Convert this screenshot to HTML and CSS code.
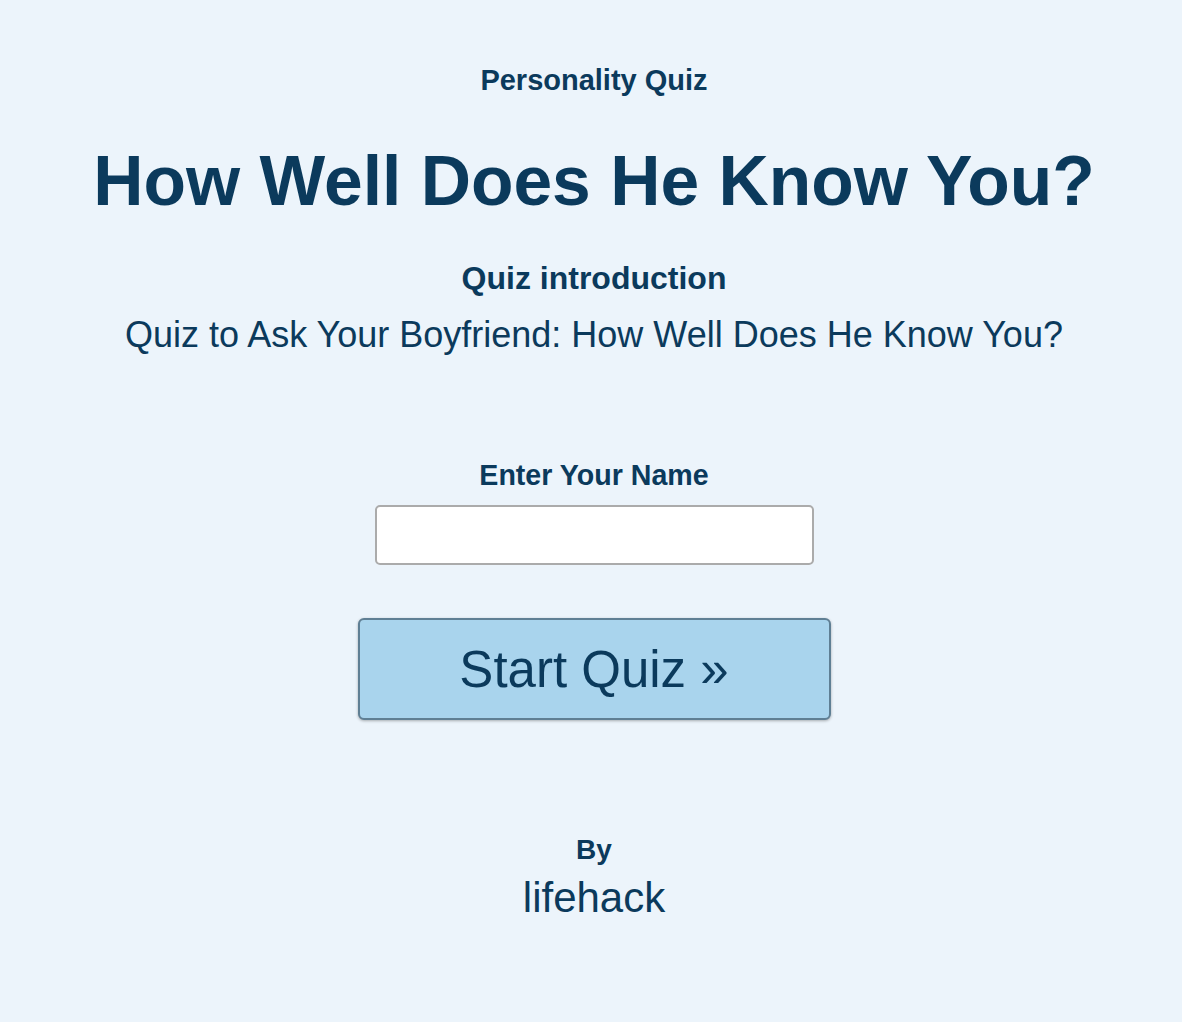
FILE: index.html
```html
<!DOCTYPE html>
<html lang="en">
<head>
<meta charset="utf-8">
<title>How Well Does He Know You?</title>
<link rel="stylesheet" href="styles.css">
</head>
<body>
<main class="quiz">
  <p class="kicker">Personality Quiz</p>
  <h1 class="title">How Well Does He Know You?</h1>
  <h2 class="intro-label">Quiz introduction</h2>
  <p class="intro-text">Quiz to Ask Your Boyfriend: How Well Does He Know You?</p>
  <form class="start-form">
    <label class="name-label" for="name">Enter Your Name</label>
    <input class="name-input" id="name" type="text">
    <button class="start-btn" type="button">Start Quiz »</button>
  </form>
  <div class="author">
    <p class="by">By</p>
    <p class="author-name">lifehack</p>
  </div>
</main>
</body>
</html>
```

FILE: styles.css
```css
html, body {
  margin: 0;
  padding: 0;
  background: #ecf4fb;
}
body {
  font-family: "Liberation Sans", Arial, sans-serif;
  color: #0b3a5c;
}
.quiz {
  display: flex;
  flex-direction: column;
  align-items: center;
  padding: 66px 0 0 6px;
  text-align: center;
}
.quiz p, .quiz h1, .quiz h2 {
  margin: 0;
  line-height: 1;
}
.kicker {
  font-size: 29px;
  font-weight: bold;
}
.title {
  margin-top: 52px !important;
  font-size: 69.6px;
  font-weight: bold;
}
.intro-label {
  margin-top: 45px !important;
  font-size: 32px;
  font-weight: bold;
}
.intro-text {
  margin-top: 23px !important;
  font-size: 36px;
}
.start-form {
  margin-top: 108px;
  display: flex;
  flex-direction: column;
  align-items: center;
}
.name-label {
  font-size: 28.6px;
  font-weight: bold;
  line-height: 1;
}
.name-input {
  margin-top: 16px;
  box-sizing: border-box;
  width: 439px;
  height: 60px;
  border: 2px solid #ababab;
  border-radius: 5px;
  background: #fff;
  font-size: 24px;
  padding: 0 10px;
}
.start-btn {
  margin-top: 53px;
  box-sizing: border-box;
  width: 473px;
  height: 102px;
  background: #a9d4ed;
  border: 2px solid #5f7f94;
  border-radius: 6px;
  box-shadow: 0 1px 3px rgba(0, 0, 0, 0.3);
  color: #0b3a5c;
  font-family: "Liberation Sans", Arial, sans-serif;
  font-size: 51px;
  line-height: 1;
  padding: 0;
}
.author {
  margin-top: 116px;
  display: flex;
  flex-direction: column;
  align-items: center;
}
.by {
  font-size: 28px;
  font-weight: bold;
}
.author-name {
  margin-top: 13px !important;
  font-size: 42px;
}
```
